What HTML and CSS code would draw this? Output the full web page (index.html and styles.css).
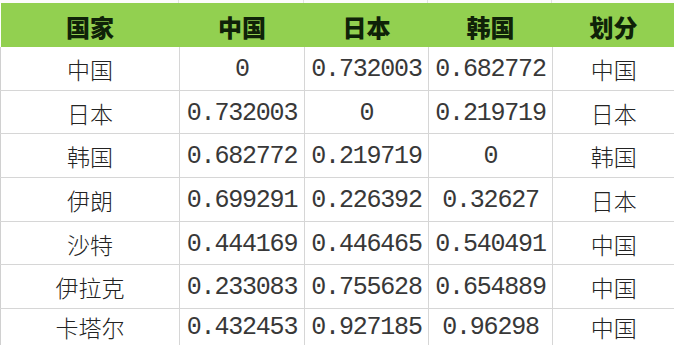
FILE: index.html
```html
<!DOCTYPE html>
<html lang="zh">
<head>
<meta charset="utf-8">
<link rel="stylesheet" href="styles.css">
</head>
<body>
<div class="sheet">
  <div class="topstrip"><span class="c1"></span><span class="c2"></span><span class="c3"></span><span class="c4"></span><span class="c5"></span></div>
  <table class="grid">
    <colgroup><col class="w1"><col class="w2"><col class="w3"><col class="w4"><col class="w5"></colgroup>
    <thead>
      <tr class="head"><th>国家</th><th>中国</th><th>日本</th><th>韩国</th><th>划分</th></tr>
    </thead>
    <tbody>
      <tr class="r1"><td class="name">中国</td><td class="num">0</td><td class="num">0.732003</td><td class="num">0.682772</td><td class="name">中国</td></tr>
      <tr class="r2"><td class="name">日本</td><td class="num">0.732003</td><td class="num">0</td><td class="num">0.219719</td><td class="name">日本</td></tr>
      <tr class="r3"><td class="name">韩国</td><td class="num">0.682772</td><td class="num">0.219719</td><td class="num">0</td><td class="name">韩国</td></tr>
      <tr class="r4"><td class="name">伊朗</td><td class="num">0.699291</td><td class="num">0.226392</td><td class="num">0.32627</td><td class="name">日本</td></tr>
      <tr class="r5"><td class="name">沙特</td><td class="num">0.444169</td><td class="num">0.446465</td><td class="num">0.540491</td><td class="name">中国</td></tr>
      <tr class="r6"><td class="name">伊拉克</td><td class="num">0.233083</td><td class="num">0.755628</td><td class="num">0.654889</td><td class="name">中国</td></tr>
      <tr class="r7"><td class="name">卡塔尔</td><td class="num">0.432453</td><td class="num">0.927185</td><td class="num">0.96298</td><td class="name">中国</td></tr>
    </tbody>
  </table>
</div>
</body>
</html>
```
FILE: styles.css
```css
html, body {
  margin: 0;
  padding: 0;
  background: #ffffff;
}
.sheet {
  width: 674px;
  height: 345px;
  overflow: hidden;
}
.topstrip {
  display: flex;
  height: 3px;
  background: #fbfbfb;
}
.topstrip span { display: block; height: 3px; box-sizing: border-box; border-right: 1px solid #e2e2e2; }
.topstrip .c1 { width: 179px; }
.topstrip .c2 { width: 125px; }
.topstrip .c3 { width: 124px; }
.topstrip .c4 { width: 124px; }
.topstrip .c5 { width: 122px; border-right: none; }

.grid {
  border-collapse: collapse;
  table-layout: fixed;
  width: 674px;
}
.w1 { width: 179px; }
.w2 { width: 125px; }
.w3 { width: 124px; }
.w4 { width: 124px; }
.w5 { width: 122px; }

.head th {
  background: #92d050;
  height: 44px;
  padding: 3px 0 0 0;
  box-sizing: border-box;
  font-family: "Noto Sans CJK SC", sans-serif;
  font-weight: 900;
  font-size: 24px;
  color: #0f2208;
  text-align: center;
  vertical-align: middle;
  line-height: 1;
}
.grid td {
  padding: 3px 0 0 0;
  box-sizing: border-box;
  border-bottom: 1px solid #d6d6d6;
  border-right: 1px solid #d6d6d6;
  text-align: center;
  vertical-align: middle;
  color: #232323;
  line-height: 1;
}
.grid td:first-child { border-left: 1px solid #d0d0d0; }
.grid td:last-child { border-right: none; }
.r1 td, .r2 td, .r5 td { height: 43px; }
.r3 td, .r4 td, .r6 td { height: 44px; }
.grid .r7 td { height: 37px; border-bottom: none; padding-top: 2px; }
.name {
  font-family: "Noto Sans CJK SC", sans-serif;
  font-weight: 300;
  font-size: 23px;
}
.num {
  font-family: "Liberation Mono", monospace;
  font-size: 25px;
  letter-spacing: -1.2px;
  color: #383838;
}
.grid td.num { color: #383838; }
```
